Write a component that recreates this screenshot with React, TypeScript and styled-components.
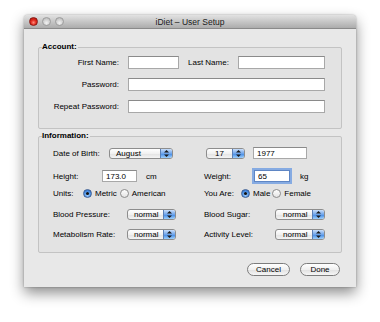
import React from 'react'
import styled, { createGlobalStyle } from 'styled-components'

const GlobalStyle = createGlobalStyle`
  html, body {
    margin: 0;
    padding: 0;
    background: #fff;
  }
  body {
    font-family: 'Liberation Sans', Arial, sans-serif;
    font-size: 8px;
    color: #000;
  }
`

const Page = styled.div`
  width: 380px;
  height: 322px;
  padding: 15px 0 0 24px;
  box-sizing: border-box;
`

const Window = styled.div`
  width: 332px;
  height: 272px;
  display: flex;
  flex-direction: column;
  background: #e8e8e8;
  border-radius: 4px 4px 0 0;
  box-shadow: 0 6px 14px rgba(0, 0, 0, 0.45), 0 0 2px rgba(0, 0, 0, 0.35);
  overflow: hidden;
`

const TitleBar = styled.div`
  height: 13px;
  display: grid;
  grid-template-columns: 1fr auto 1fr;
  align-items: center;
  background: linear-gradient(#e2e2e2, #acacac);
  border-bottom: 1px solid #8a8a8a;
`

const Lights = styled.div`
  display: flex;
  gap: 4px;
  padding-left: 5px;
`

const Light = styled.span<{ $red?: boolean }>`
  width: 9px;
  height: 9px;
  border-radius: 50%;
  box-sizing: border-box;
  border: 1px solid ${(p) => (p.$red ? '#8a1a14' : '#9c9c9c')};
  background: ${(p) =>
    p.$red
      ? 'radial-gradient(circle at 50% 65%, #ff8a7a 0%, #e0281c 45%, #a8150d 100%)'
      : 'radial-gradient(circle at 50% 70%, #f2f2f2 0%, #cfcfcf 55%, #b0b0b0 100%)'};
`

const Title = styled.div`
  font-size: 8.5px;
  color: #1a1a1a;
  white-space: nowrap;
`

const Body = styled.div`
  display: flex;
  flex-direction: column;
  padding: 13px 14px 0;
`

const Group = styled.fieldset<{ $pb: number; $mt?: number }>`
  margin: ${(p) => p.$mt ?? 0}px 0 0;
  padding: 4px 16px ${(p) => p.$pb}px 0;
  border: 1px solid #c3c3c3;
  border-radius: 2px;
  background: #e3e3e3;
  min-width: 0;
`

const GroupTitle = styled.legend`
  margin-left: 3px;
  padding: 0 1px 0 0;
  font-weight: bold;
  font-size: 8px;
  line-height: 10px;
  color: #000;
`

const AccountGrid = styled.div`
  display: grid;
  grid-template-columns: 80px 51px 1fr 87px;
  column-gap: 9px;
  row-gap: 9px;
  align-items: center;
`

const Label = styled.span<{ $w?: number; $right?: boolean }>`
  ${(p) => (p.$w ? `width: ${p.$w}px; flex: none;` : '')}
  text-align: ${(p) => (p.$right ? 'right' : 'left')};
  white-space: nowrap;
  color: #000;
`

const TextField = styled.input<{ $w?: number; $h?: number; $span?: boolean; $focus?: boolean }>`
  ${(p) => (p.$w ? `width: ${p.$w}px;` : 'width: 100%;')}
  height: ${(p) => p.$h ?? 13}px;
  ${(p) => (p.$span ? 'grid-column: 2 / span 3;' : '')}
  box-sizing: border-box;
  margin: 0;
  padding: 0 3px;
  border: 1px solid #a8a8a8;
  border-top-color: #8a8a8a;
  background: #fff;
  font-family: inherit;
  font-size: 8px;
  color: #000;
  outline: none;
  ${(p) => (p.$focus ? 'box-shadow: 0 0 0 2px #86abe2; border-color: #5f86c4;' : '')}
`

const InfoRow = styled.div<{ $mt: number; $h: number }>`
  display: grid;
  grid-template-columns: 151px 1fr;
  height: ${(p) => p.$h}px;
  margin-top: ${(p) => p.$mt}px;
  padding-left: 14px;
`

const Cell = styled.div<{ $gap?: number; $pl?: number }>`
  display: flex;
  align-items: center;
  gap: ${(p) => p.$gap ?? 0}px;
  padding-left: ${(p) => p.$pl ?? 0}px;
`

const PopupBox = styled.div<{ $w: number }>`
  width: ${(p) => p.$w}px;
  height: 11px;
  box-sizing: border-box;
  display: flex;
  align-items: stretch;
  border: 1px solid #8d8d8d;
  border-radius: 3px;
  background: linear-gradient(#ffffff, #f1f1f1 50%, #e2e2e2 51%, #f4f4f4);
  overflow: hidden;
  flex: none;
`

const PopupText = styled.span<{ $pad: number }>`
  flex: 1;
  padding-left: ${(p) => p.$pad}px;
  line-height: 9px;
  font-size: 8px;
  color: #000;
  white-space: nowrap;
`

const PopupArrows = styled.span`
  width: 11px;
  display: flex;
  align-items: center;
  justify-content: center;
  border-left: 1px solid #5a7fb5;
  background: linear-gradient(#c9defa, #6ea4ea 50%, #3f86e4 51%, #9fd0fb);
`

const Popup = ({ w, pad, value }: { w: number; pad: number; value: string }) => (
  <PopupBox $w={w}>
    <PopupText $pad={pad}>{value}</PopupText>
    <PopupArrows>
      <svg width="5" height="7" viewBox="0 0 5 7">
        <path d="M2.5 0 L5 2.6 L0 2.6 Z" fill="#1b1b1b" />
        <path d="M0 4.4 L5 4.4 L2.5 7 Z" fill="#1b1b1b" />
      </svg>
    </PopupArrows>
  </PopupBox>
)

const RadioDot = styled.span<{ $on?: boolean }>`
  width: 9px;
  height: 9px;
  flex: none;
  box-sizing: border-box;
  border-radius: 50%;
  display: flex;
  align-items: center;
  justify-content: center;
  border: 1px solid ${(p) => (p.$on ? '#3c5f95' : '#8c8c8c')};
  background: ${(p) =>
    p.$on
      ? 'radial-gradient(circle at 50% 70%, #a9d4ff 0%, #4b8fe3 55%, #2d68c2 100%)'
      : 'linear-gradient(#fdfdfd, #e4e4e4)'};
  &::after {
    content: '';
    display: ${(p) => (p.$on ? 'block' : 'none')};
    width: 3px;
    height: 3px;
    border-radius: 50%;
    background: #111;
  }
`

const RadioLabel = styled.span<{ $mr?: number }>`
  margin: 0 ${(p) => p.$mr ?? 0}px 0 3px;
  white-space: nowrap;
`

const Footer = styled.div`
  display: flex;
  justify-content: flex-end;
  gap: 10px;
  margin-top: 10px;
  padding-right: 2px;
`

const PushButton = styled.button<{ $w: number }>`
  width: ${(p) => p.$w}px;
  height: 13px;
  box-sizing: border-box;
  margin: 0;
  padding: 0;
  border: 1px solid #7c7c7c;
  border-radius: 7px;
  background: linear-gradient(#ffffff, #f0f0f0 50%, #e0e0e0 51%, #f6f6f6);
  font-family: inherit;
  font-size: 8px;
  line-height: 11px;
  color: #000;
`

const App = () => (
  <Page>
    <GlobalStyle />
    <Window>
      <TitleBar>
        <Lights>
          <Light $red />
          <Light />
          <Light />
        </Lights>
        <Title>iDiet – User Setup</Title>
        <span />
      </TitleBar>
      <Body>
        <Group $pb={15}>
          <GroupTitle>Account:</GroupTitle>
          <AccountGrid>
            <Label $right>First Name:</Label>
            <TextField readOnly />
            <Label>Last Name:</Label>
            <TextField readOnly />
            <Label $right>Password:</Label>
            <TextField readOnly $span />
            <Label $right>Repeat Password:</Label>
            <TextField readOnly $span />
          </AccountGrid>
        </Group>

        <Group $pb={12} $mt={2}>
          <GroupTitle>Information:</GroupTitle>
          <InfoRow $mt={2} $h={12}>
            <Cell>
              <Label $w={56}>Date of Birth:</Label>
              <Popup w={64} pad={6} value="August" />
            </Cell>
            <Cell $gap={8} $pl={2}>
              <Popup w={39} pad={8} value="17" />
              <TextField readOnly $w={54} $h={12} value="1977" />
            </Cell>
          </InfoRow>
          <InfoRow $mt={10} $h={14}>
            <Cell>
              <Label $w={49}>Height:</Label>
              <TextField readOnly $w={35} $h={12} value="173.0" />
              <Label style={{ marginLeft: 9 }}>cm</Label>
            </Cell>
            <Cell>
              <Label $w={50}>Weight:</Label>
              <TextField readOnly $w={36} $h={12} $focus value="65" />
              <Label style={{ marginLeft: 10 }}>kg</Label>
            </Cell>
          </InfoRow>
          <InfoRow $mt={5} $h={10}>
            <Cell>
              <Label $w={30}>Units:</Label>
              <RadioDot $on />
              <RadioLabel $mr={3}>Metric</RadioLabel>
              <RadioDot />
              <RadioLabel>American</RadioLabel>
            </Cell>
            <Cell>
              <Label $w={37}>You Are:</Label>
              <RadioDot $on />
              <RadioLabel $mr={2}>Male</RadioLabel>
              <RadioDot />
              <RadioLabel>Female</RadioLabel>
            </Cell>
          </InfoRow>
          <InfoRow $mt={10} $h={12}>
            <Cell>
              <Label $w={74}>Blood Pressure:</Label>
              <Popup w={49} pad={6} value="normal" />
            </Cell>
            <Cell>
              <Label $w={71}>Blood Sugar:</Label>
              <Popup w={50} pad={7} value="normal" />
            </Cell>
          </InfoRow>
          <InfoRow $mt={8} $h={12}>
            <Cell>
              <Label $w={74}>Metabolism Rate:</Label>
              <Popup w={49} pad={6} value="normal" />
            </Cell>
            <Cell>
              <Label $w={71}>Activity Level:</Label>
              <Popup w={50} pad={7} value="normal" />
            </Cell>
          </InfoRow>
        </Group>

        <Footer>
          <PushButton $w={43}>Cancel</PushButton>
          <PushButton $w={40}>Done</PushButton>
        </Footer>
      </Body>
    </Window>
  </Page>
)

export default App
